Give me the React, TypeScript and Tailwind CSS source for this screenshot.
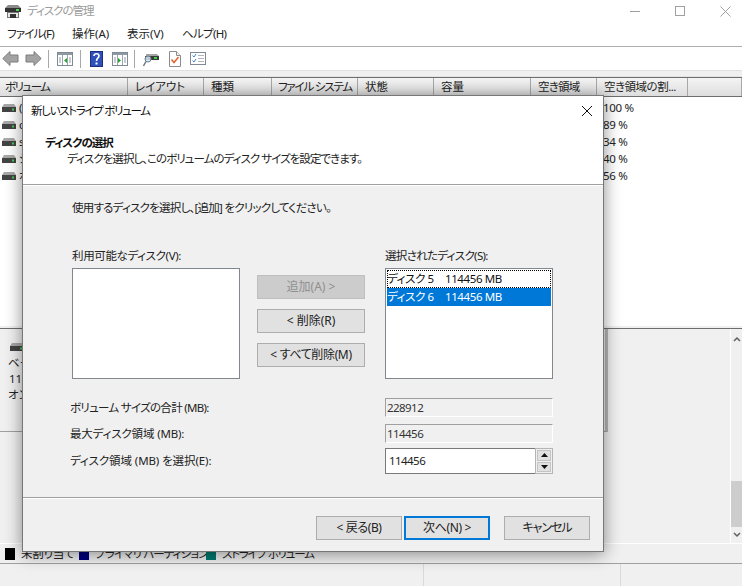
import React from "react";

const FONT = "font-['Noto_Sans','Noto_Sans_CJK_JP',sans-serif] [font-feature-settings:'palt']";

const columns = [
  { label: "ボリューム", w: "w-[128px] pl-[5px] tracking-[-1.5px]" },
  { label: "レイアウト", w: "w-[76px] pl-[7px]" },
  { label: "種類", w: "w-[68px] pl-[7px]" },
  { label: "ファイル システム", w: "w-[86px] pl-[6px] tracking-[-1.2px]" },
  { label: "状態", w: "w-[76px] pl-[7px]" },
  { label: "容量", w: "w-[97px] pl-[7px]" },
  { label: "空き領域", w: "w-[66px] pl-[7px] tracking-[-0.8px]" },
  { label: "空き領域の割...", w: "w-[91px] pl-[7px] tracking-[-0.5px]" },
  { label: "", w: "flex-1" },
];

const rows = [
  { name: "(", pct: "100 %" },
  { name: "c", pct: "89 %" },
  { name: "s", pct: "34 %" },
  { name: "シ", pct: "40 %" },
  { name: "ボ", pct: "56 %" },
];

const DiskIcon = () => (
  <svg width="14" height="8" viewBox="0 0 14 8" className="shrink-0">
    <path d="M2 0h10l2 3H0z" fill="#a8a8a8" />
    <rect x="0" y="3" width="14" height="5" fill="#444" />
    <rect x="10" y="4.5" width="2" height="2" fill="#3fd04a" />
  </svg>
);

const AppIcon = () => (
  <svg width="16" height="13" viewBox="0 0 16 13">
    <path d="M3 0h10l3 3H0z" fill="#8a8a8a" />
    <rect x="0" y="3" width="16" height="4" fill="#333" />
    <rect x="11" y="4" width="3" height="2" fill="#4fd35a" />
    <rect x="2.5" y="7.5" width="11" height="5" fill="#e8e8e8" stroke="#777" />
    <rect x="5" y="9" width="6" height="4" fill="#333" />
  </svg>
);

const ArrowIcon = ({ flip }: { flip?: boolean }) => (
  <svg width="17" height="15" viewBox="0 0 17 15" className={flip ? "-scale-x-100" : ""}>
    <path d="M8 0.5 0.8 7.5 8 14.5V11h8V4H8z" fill="#a3a3a3" stroke="#7c7c7c" />
  </svg>
);

const PaneIcon = ({ side }: { side: "left" | "right" }) => (
  <svg width="16" height="14" viewBox="0 0 16 14">
    <rect x="0.5" y="0.5" width="15" height="13" fill="#fff" stroke="#7f8a94" />
    <rect x="1" y="1" width="14" height="2" fill="#8d99a3" />
    <path d="M5.5 3v10M10.5 3v10" stroke="#9aa5ae" />
    {side === "left" ? (
      <path d="M10 6v5L7 8.5z" fill="#23a52c" />
    ) : (
      <path d="M6 6v5l3-2.5z" fill="#23a52c" />
    )}
    <path d="M2 6h2M2 8h2M2 10h2M12 6h2M12 8h2M12 10h2" stroke="#8d99a3" />
  </svg>
);

const HelpIcon = () => (
  <svg width="13" height="16" viewBox="0 0 13 16">
    <rect width="13" height="16" fill="#2f50b8" />
    <rect x="0.5" y="0.5" width="12" height="15" fill="none" stroke="#1c2f80" />
    <path d="M4 5c0-3 5-3 5 0 0 2-2.5 2-2.5 5" fill="none" stroke="#fff" strokeWidth="1.6" />
    <rect x="5.5" y="11.5" width="2" height="2" fill="#fff" />
  </svg>
);

const ScopeIcon = () => (
  <svg width="16" height="16" viewBox="0 0 16 16">
    <path d="M3 3h11l2 2H3z" fill="#a5a5a5" />
    <rect x="2" y="5" width="14" height="4" fill="#3a3a3a" />
    <rect x="11" y="6" width="3" height="2" fill="#3fd04a" />
    <circle cx="5" cy="8" r="3" fill="#d5e6f2" fillOpacity="0.85" stroke="#6c7c88" />
    <path d="M3 10.5 0.5 15" stroke="#6c7c88" strokeWidth="1.5" />
  </svg>
);

const DocCheckIcon = () => (
  <svg width="12" height="16" viewBox="0 0 12 16">
    <path d="M0.5 0.5h7l4 4v11h-11z" fill="#fff" stroke="#8d8d8d" />
    <path d="M7.5 0.5v4h4" fill="#eee" stroke="#8d8d8d" />
    <path d="M2.5 8.5 5 11.5 9.5 6" fill="none" stroke="#e8622a" strokeWidth="1.5" />
  </svg>
);

const ChecklistIcon = () => (
  <svg width="16" height="13" viewBox="0 0 16 13">
    <rect x="0.5" y="0.5" width="15" height="12" fill="#fff" stroke="#7f8a94" />
    <path d="M2.5 3.5 4 5l2-3M2.5 8.5 4 10l2-3" fill="none" stroke="#3a86d8" />
    <path d="M8 3.5h6M8 6.5h6M8 9.5h6" stroke="#b0b6bb" />
  </svg>
);

const ToolSep = () => <div className="w-px h-[18px] bg-[#a8a8a8]" />;

const DlgButton = ({
  children,
  disabled,
  focused,
  className,
}: {
  children: React.ReactNode;
  disabled?: boolean;
  focused?: boolean;
  className?: string;
}) => (
  <div
    className={`h-[24px] flex items-center justify-center text-[12px] tracking-[-0.36px] ${
      focused ? "border-2 border-[#0078d7]" : "border border-[#adadad]"
    } ${disabled ? "bg-[#cccccc] text-[#8f8f8f] border-[#bfbfbf]" : "bg-[#e1e1e1] text-[#222]"} ${className ?? ""}`}
  >
    {children}
  </div>
);

const ReadField = ({ value }: { value: string }) => (
  <div className="h-[19px] w-[168px] flex items-center pl-[1px] border-t border-l border-[#a0a0a0] border-r-white border-b-white border-r border-b text-[#333] tracking-[-0.55px]">
    {value}
  </div>
);

const Dialog = () => (
  <div className="absolute left-[22px] top-[95px] w-[582px] h-[457px] flex flex-col bg-[#f0f0f0] border border-[#777] shadow-[0_2px_16px_rgba(0,0,0,0.45)]">
    <div className="h-[88px] bg-white relative pl-[8px] pt-[6px]">
      <div className="leading-[18px] text-[#111] tracking-[-1.3px]">新しいストライプ ボリューム</div>
      <svg width="12" height="12" viewBox="0 0 12 12" className="absolute right-[10px] top-[9px]">
        <path d="M1 1l10 10M11 1 1 11" stroke="#111" strokeWidth="1" />
      </svg>
      <div className="pl-[14px] mt-[15px] leading-[16px] font-bold text-[#111] tracking-[-1px]">ディスクの選択</div>
      <div className="pl-[36px] leading-[15px] text-[#222] tracking-[-0.95px]">
        ディスクを選択し、このボリュームのディスク サイズを設定できます。
      </div>
    </div>
    <div className="h-[2px] border-t border-[#a0a0a0] border-b border-b-white" />

    <div className="flex-1 flex flex-col pl-[49px]">
      <div className="mt-[13px] h-[18px] leading-[18px] text-[#222] tracking-[-0.75px]">
        使用するディスクを選択し、[追加] をクリックしてください。
      </div>

      <div className="mt-[30px] flex">
        <div className="w-[168px]">
          <div className="h-[18px] leading-[18px] text-[#222] tracking-[-0.36px]">利用可能なディスク(V):</div>
          <div className="mt-[3px] h-[111px] bg-white border border-[#82878f]" />
        </div>
        <div className="ml-[17px] w-[108px] pt-[28px] flex flex-col gap-[10px]">
          <DlgButton disabled className="!tracking-[0px]">追加(A) &gt;</DlgButton>
          <DlgButton className="!tracking-[0px]">&lt; 削除(R)</DlgButton>
          <DlgButton>&lt; すべて削除(M)</DlgButton>
        </div>
        <div className="ml-[20px] w-[168px]">
          <div className="h-[18px] leading-[18px] text-[#222] tracking-[-0.68px]">選択されたディスク(S):</div>
          <div className="mt-[3px] h-[111px] bg-white border border-[#82878f] p-[1px]">
            <div className="h-[18px] flex items-center border border-dotted border-black text-[#111]">
              <span className="w-[58px] -ml-[1px] tracking-[-0.4px]">ディスク 5</span>
              <span className="tracking-[-0.4px]">114456 MB</span>
            </div>
            <div className="h-[18px] flex items-center bg-[#0078d7] text-white">
              <span className="w-[58px] tracking-[-0.4px]">ディスク 6</span>
              <span className="tracking-[-0.4px]">114456 MB</span>
            </div>
          </div>
        </div>
      </div>

      <div className="mt-[19px] flex flex-col text-[#222] -ml-[2px]">
        <div className="flex items-center justify-between w-[483px] h-[19px]">
          <span className="tracking-[-0.7px]">ボリューム サイズの合計 (MB):</span>
          <ReadField value="228912" />
        </div>
        <div className="mt-[7px] flex items-center justify-between w-[483px] h-[19px]">
          <span className="tracking-[-0.15px]">最大ディスク領域 (MB):</span>
          <ReadField value="114456" />
        </div>
        <div className="mt-[5px] flex items-center justify-between w-[483px] h-[26px]">
          <span className="tracking-[-0.1px]">ディスク領域 (MB) を選択(E):</span>
          <div className="h-[26px] w-[168px] flex">
            <div className="flex-1 bg-white border border-[#7a7a7a] border-r-0 flex items-center pl-[3px] text-[#222] tracking-[-0.55px]">114456</div>
            <div className="w-[18px] border border-[#b5b5b5] p-[1px] flex flex-col gap-[1px]">
              <div className="flex-1 bg-[#e1e1e1] border border-[#c4c4c4] flex items-center justify-center">
                <svg width="7" height="4" viewBox="0 0 7 4"><path d="M3.5 0 7 4H0z" fill="#111" /></svg>
              </div>
              <div className="flex-1 bg-[#e1e1e1] border border-[#c4c4c4] flex items-center justify-center">
                <svg width="7" height="4" viewBox="0 0 7 4"><path d="M3.5 4 7 0H0z" fill="#111" /></svg>
              </div>
            </div>
          </div>
        </div>
      </div>
    </div>

    <div className="h-[2px] border-t border-[#a0a0a0] border-b border-b-white" />
    <div className="h-[52px] flex items-start pt-[17px] pl-[293px]">
      <DlgButton className="w-[86px]">&lt; 戻る(B)</DlgButton>
      <DlgButton focused className="w-[86px] ml-[2px]">次へ(N) &gt;</DlgButton>
      <DlgButton className="w-[86px] ml-[14px] !tracking-[-1px]">キャンセル</DlgButton>
    </div>
  </div>
);

export default function App() {
  return (
    <div className={`${FONT} relative w-[742px] h-[586px] overflow-hidden bg-white flex flex-col text-[11.5px]`}>
      {/* title bar */}
      <div className="h-[21px] flex items-center relative pl-[5px] pt-[1px]">
        <AppIcon />
        <span className="ml-[6px] text-[#9a9a9a] tracking-[-1px]">ディスクの管理</span>
        <div className="ml-auto flex items-center gap-[35px] pr-[11px]">
          <div className="w-[10px] h-px bg-[#a0a0a0]" />
          <div className="w-[10px] h-[10px] border border-[#a0a0a0]" />
          <svg width="11" height="11" viewBox="0 0 11 11">
            <path d="M0.5 0.5l10 10M10.5 0.5l-10 10" stroke="#a0a0a0" />
          </svg>
        </div>
      </div>

      {/* menu */}
      <div className="h-[26px] flex items-center pl-[7px] pt-[1px] text-[#222] border-b border-[#aeaeae]">
        <span className="w-[65px] tracking-[-0.85px]">ファイル(F)</span>
        <span className="w-[55px]">操作(A)</span>
        <span className="w-[55px]">表示(V)</span>
        <span className="tracking-[-0.7px]">ヘルプ(H)</span>
      </div>

      {/* toolbar */}
      <div className="h-[23px] flex items-center pl-[2px]">
        <ArrowIcon />
        <div className="ml-[6px]"><ArrowIcon flip /></div>
        <div className="ml-[6px]"><ToolSep /></div>
        <div className="ml-[8px]"><PaneIcon side="left" /></div>
        <div className="ml-[7px]"><ToolSep /></div>
        <div className="ml-[9px]"><HelpIcon /></div>
        <div className="ml-[9px]"><PaneIcon side="right" /></div>
        <div className="ml-[6px]"><ToolSep /></div>
        <div className="ml-[8px]"><ScopeIcon /></div>
        <div className="ml-[10px]"><DocCheckIcon /></div>
        <div className="ml-[9px]"><ChecklistIcon /></div>
      </div>
      <div className="h-[7px] bg-[#f0f0f0] border-t border-[#e0e0e0] border-b border-b-[#e4e4e4]" />

      {/* volume table */}
      <div className="h-[20px] flex border-t border-b border-[#6e6e6e] bg-[#f0f0f0]">
        {columns.map((c, i) => (
          <div
            key={i}
            className={`${c.w} flex items-center overflow-hidden border-r border-[#a8a8a8] bg-gradient-to-b from-[#f4f4f4] to-[#dedede] text-[#222] whitespace-nowrap`}
          >
            {c.label}
          </div>
        ))}
      </div>
      <div className="h-[229px] bg-white pt-[2px]">
        {rows.map((r) => (
          <div key={r.pct} className="h-[17px] flex items-center text-[#222]">
            <div className="w-[603px] pl-[2px] flex items-center gap-[3px]">
              <DiskIcon />
              <span>{r.name}</span>
            </div>
            <span className="tracking-[-0.3px]">{r.pct}</span>
          </div>
        ))}
      </div>
      <div className="h-[3px] bg-[#f0f0f0] border-b border-[#6e6e6e]" />

      {/* disk pane */}
      <div className="h-[215px] bg-[#f0f0f0] flex border-b border-white">
        <div className="w-[608px] h-[103px] border-b border-[#a0a0a0] border-r-[3px] border-r-[#b8b8b8] pl-[8px] pt-[14px] text-[#222]">
          <div className="ml-[2px]"><DiskIcon /></div>
          <div className="mt-[4px] leading-[16px]">ベーシック</div>
          <div className="ml-[1px] leading-[16px]">114456 MB</div>
          <div className="leading-[16px]">オンライン</div>
        </div>
        <div className="ml-auto w-[12px] border-l border-white flex flex-col items-center justify-between">
          <svg width="8" height="6" viewBox="0 0 8 6" className="mt-[7px]">
            <path d="M1 5l3-3 3 3" fill="none" stroke="#606060" strokeWidth="1.5" />
          </svg>
          <div className="w-full h-[46px] bg-[#cdcdcd] mt-auto mb-[5px]" />
          <svg width="8" height="6" viewBox="0 0 8 6" className="mb-[5px]">
            <path d="M1 1l3 3 3-3" fill="none" stroke="#606060" strokeWidth="1.5" />
          </svg>
        </div>
      </div>

      {/* legend */}
      <div className="h-[20px] flex items-center pl-[5px] bg-[#f0f0f0] border-b border-[#a0a0a0] text-[#222] whitespace-nowrap">
        <div className="w-[10px] h-[12px] bg-black" />
        <span className="ml-[6px] w-[58px] tracking-[-0.3px]">未割り当て</span>
        <div className="w-[10px] h-[12px] bg-[#000080]" />
        <span className="ml-[6px] w-[111px] tracking-[-0.85px]">プライマリ パーティション</span>
        <div className="w-[10px] h-[12px] bg-[#007a70]" />
        <span className="ml-[6px] tracking-[-1.2px]">ストライプ ボリューム</span>
      </div>

      {/* status bar */}
      <div className="flex-1 flex bg-[#f0f0f0]">
        <div className="w-[424px] border-r border-[#d9d9d9]" />
        <div className="w-[197px] border-r border-[#d9d9d9]" />
      </div>

      <Dialog />
    </div>
  );
}
